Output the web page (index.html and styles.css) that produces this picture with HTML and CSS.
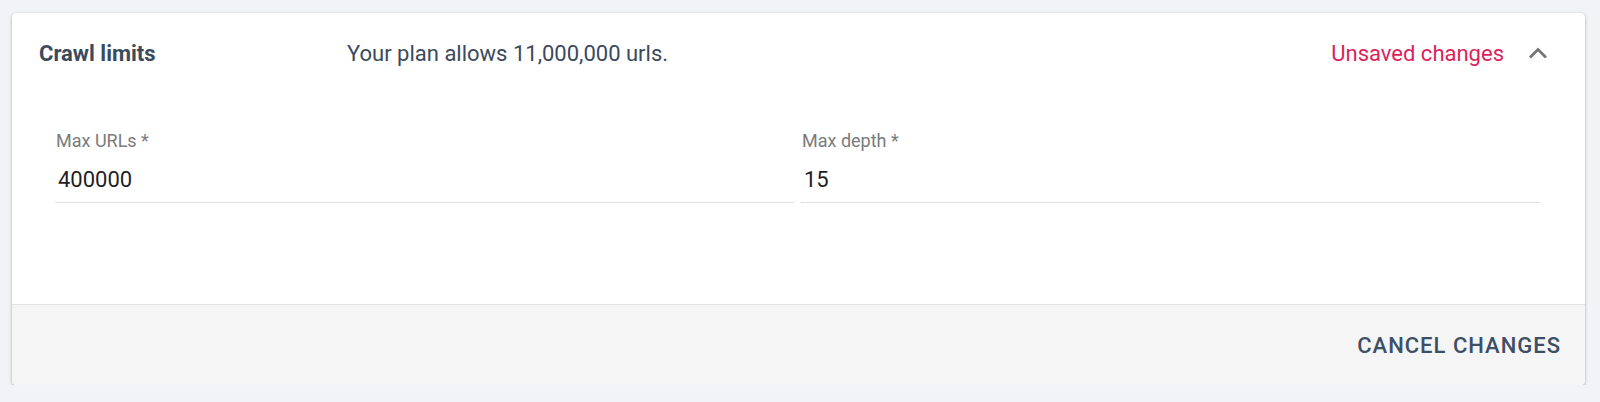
FILE: index.html
```html
<!DOCTYPE html>
<html>
<head>
<meta charset="utf-8">
<link rel="stylesheet" href="styles.css">
</head>
<body>
<div class="page">
  <section class="panel">
    <header class="panel-header">
      <div class="title">Crawl limits</div>
      <div class="desc">Your plan allows 11,000,000 urls.</div>
      <div class="status">Unsaved changes</div>
      <span class="chevron">
        <svg width="20" height="12" viewBox="0 0 20 12"><path d="M2 10.5 L10 2.5 L18 10.5" fill="none" stroke="#757575" stroke-width="2.8"/></svg>
      </span>
    </header>
    <div class="panel-body">
      <div class="field">
        <div class="label">Max URLs *</div>
        <div class="value">400000</div>
      </div>
      <div class="field">
        <div class="label">Max depth *</div>
        <div class="value">15</div>
      </div>
    </div>
    <footer class="panel-footer">
      <button class="btn">CANCEL CHANGES</button>
    </footer>
  </section>
</div>
</body>
</html>
```
FILE: styles.css
```css
html, body {
  margin: 0;
  padding: 0;
  background: #f1f3f6;
  font-family: Roboto, "Liberation Sans", sans-serif;
}
.page {
  padding: 13px 15px 0 12px;
}
.panel {
  background: #fff;
  border-radius: 4px;
  box-shadow: 0 2px 3px rgba(0,0,0,0.16), 0 1px 4px rgba(0,0,0,0.12), 0 0 1px rgba(0,0,0,0.2);
  overflow: hidden;
}
.panel-header {
  height: 80px;
  display: flex;
  align-items: center;
  padding: 0 37px 0 27px;
}
.title {
  width: 308px;
  flex: none;
  font-size: 22px;
  font-weight: 700;
  color: #3b4a5c;
}
.desc {
  flex: 1;
  font-size: 22px;
  color: #3b4a5c;
}
.status {
  font-size: 22px;
  color: #dc1f5c;
  margin-right: 24px;
}
.chevron {
  display: flex;
  width: 20px;
  height: 12px;
}
.panel-body {
  display: flex;
  gap: 7px;
  padding: 37px 45px 101px 43px;
}
.field {
  flex: 1;
  border-bottom: 1px solid #e0e0e0;
  padding-bottom: 9px;
}
.label {
  font-size: 18px;
  line-height: 21px;
  color: #7b7b7b;
  margin-bottom: 16px;
  padding-left: 1px;
}
.value {
  font-size: 22px;
  line-height: 26px;
  color: #1f1f1f;
  padding-left: 3px;
}
.panel-footer {
  border-top: 1px solid #e2e2e2;
  background: #f5f5f5;
  height: 80px;
  display: flex;
  align-items: center;
  justify-content: flex-end;
  padding-right: 24px;
}
.btn {
  border: none;
  background: none;
  padding: 0;
  font-family: Roboto, "Liberation Sans", sans-serif;
  font-size: 22px;
  font-weight: 500;
  letter-spacing: 1px;
  color: #3d4f66;
}
```
